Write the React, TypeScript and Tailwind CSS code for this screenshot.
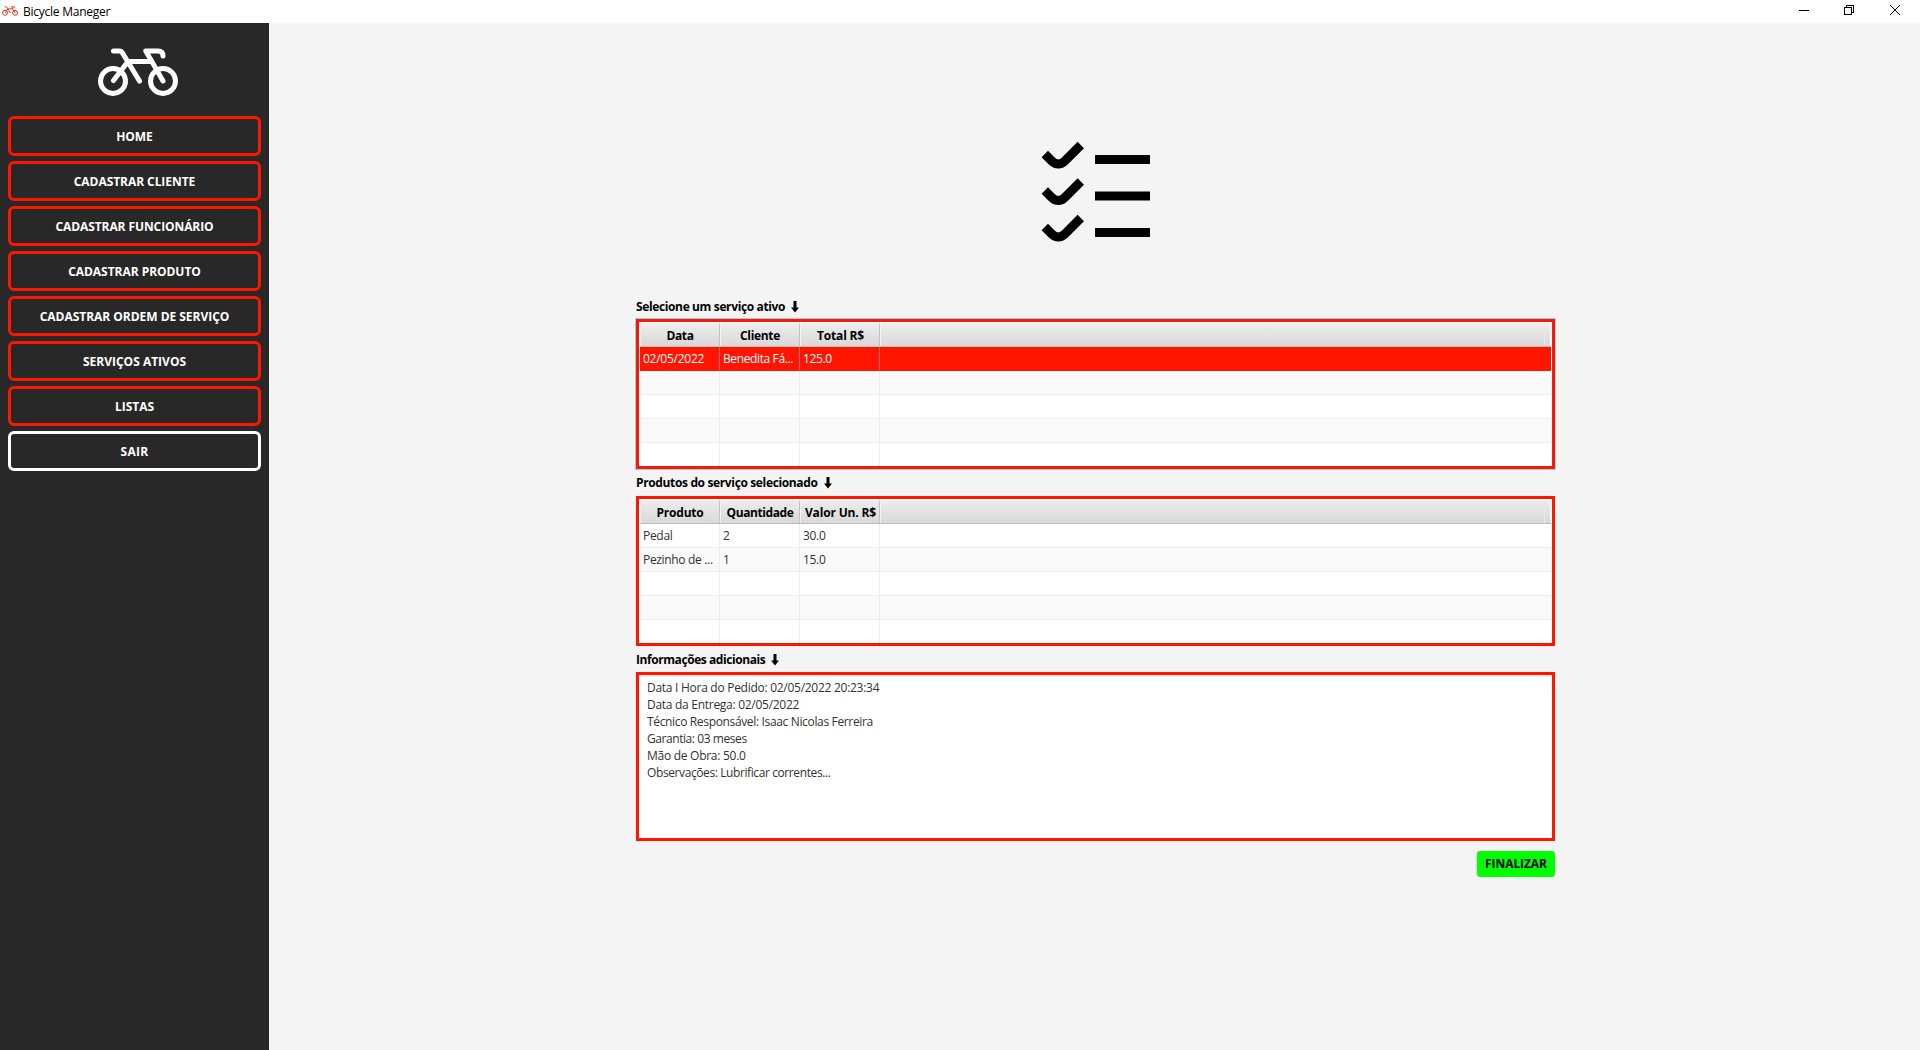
import type { ReactNode } from "react";

type Txt = { text: string; tracking: string };

const menu: (Txt & { border: string })[] = [
  { text: "HOME", tracking: "tracking-[-0.05px]", border: "border-[#ff1500]" },
  { text: "CADASTRAR CLIENTE", tracking: "tracking-[-0.06px]", border: "border-[#ff1500]" },
  { text: "CADASTRAR FUNCIONÁRIO", tracking: "tracking-[-0.09px]", border: "border-[#ff1500]" },
  { text: "CADASTRAR PRODUTO", tracking: "tracking-[-0.04px]", border: "border-[#ff1500]" },
  { text: "CADASTRAR ORDEM DE SERVIÇO", tracking: "tracking-[-0.03px]", border: "border-[#ff1500]" },
  { text: "SERVIÇOS ATIVOS", tracking: "tracking-[0px]", border: "border-[#ff1500]" },
  { text: "LISTAS", tracking: "tracking-[0px]", border: "border-[#ff1500]" },
  { text: "SAIR", tracking: "tracking-[0.3px]", border: "border-white" },
];

const services = {
  columns: [
    { text: "Data", tracking: "tracking-[-0.35px]" },
    { text: "Cliente", tracking: "tracking-[-0.3px]" },
    { text: "Total R$", tracking: "tracking-[-0.16px] pl-px" },
  ],
  rows: [
    [
      { text: "02/05/2022", tracking: "tracking-[-0.25px]" },
      { text: "Benedita Fá...", tracking: "tracking-[-0.38px]" },
      { text: "125.0", tracking: "tracking-[-0.35px]" },
    ],
  ] as Txt[][],
};

const products = {
  columns: [
    { text: "Produto", tracking: "tracking-[-0.2px]" },
    { text: "Quantidade", tracking: "tracking-[-0.4px]" },
    { text: "Valor Un. R$", tracking: "tracking-[-0.16px] pl-px" },
  ],
  rows: [
    [
      { text: "Pedal", tracking: "tracking-[-0.3px]" },
      { text: "2", tracking: "tracking-[-0.3px]" },
      { text: "30.0", tracking: "tracking-[-0.3px]" },
    ],
    [
      { text: "Pezinho de ...", tracking: "tracking-[-0.33px]" },
      { text: "1", tracking: "tracking-[-0.3px]" },
      { text: "15.0", tracking: "tracking-[-0.3px]" },
    ],
  ] as Txt[][],
};

const info: Txt[] = [
  { text: "Data I Hora do Pedido: 02/05/2022 20:23:34", tracking: "tracking-[-0.275px]" },
  { text: "Data da Entrega: 02/05/2022", tracking: "tracking-[-0.28px]" },
  { text: "Técnico Responsável: Isaac Nicolas Ferreira", tracking: "tracking-[-0.345px]" },
  { text: "Garantia: 03 meses", tracking: "tracking-[-0.43px]" },
  { text: "Mão de Obra: 50.0", tracking: "tracking-[-0.27px]" },
  { text: "Observações: Lubrificar correntes...", tracking: "tracking-[-0.4px]" },
];

function Bike({ className }: { className: string }) {
  return (
    <svg viewBox="0 0 80 48" className={className} fill="none" stroke="currentColor" strokeWidth="5" strokeLinecap="round" strokeLinejoin="round">
      <circle cx="15" cy="33" r="12.5" />
      <circle cx="65" cy="33" r="12.5" />
      <path d="M15.5 32.5 L30 13.5 H53" />
      <path d="M15.5 3 H21.5 Q23.5 3 24.5 5 L41.5 33" />
      <path d="M65 33 L47.8 3 H60 Q65 3 65 8" />
    </svg>
  );
}

function Checklist() {
  return (
    <svg viewBox="0 0 112 104" className="h-[104px] w-[112px]" fill="none" stroke="#000" strokeWidth="9">
      {[0, 36.5, 73].map((y) => (
        <g key={y} transform={`translate(0 ${y})`}>
          <path d="M4.8 14 L11.5 20.7 Q18.3 27.3 25.1 20.7 L40.8 5" />
          <path d="M55 19.5 H110" />
        </g>
      ))}
    </svg>
  );
}

function DownArrow() {
  return (
    <svg viewBox="0 0 8 12" className="ml-[5.5px] h-3 w-2 fill-black">
      <path d="M2.5 0 H5.5 V6.5 H8 L4 11.5 L0 6.5 H2.5 Z" />
    </svg>
  );
}

function SectionLabel({ tracking, width, children }: { tracking: string; width: string; children: ReactNode }) {
  return (
    <div className="flex h-[17px] items-center font-bold whitespace-nowrap text-black">
      <span className={`${tracking} ${width}`}>{children}</span>
      <DownArrow />
    </div>
  );
}

function DataTable({ columns, rows, selected }: { columns: Txt[]; rows: Txt[][]; selected?: boolean }) {
  return (
    <div
      className={`h-[150px] border-3 border-[#ff1500] bg-white p-px ${
        selected ? "shadow-[0_0_0_1px_#93d4e8]" : ""
      }`}
    >
      <div className="flex h-6 border-b border-[#bcbcbc] bg-linear-to-b from-[#ededed] to-[#d9d9d9] font-bold text-black">
        {columns.map((c) => (
          <div key={c.text} className="flex w-20 items-center justify-center border-t border-r border-l border-t-[#f3f3f3] border-r-[#c2c2c2] border-l-[#f3f3f3] whitespace-nowrap">
            <span className={c.tracking}>{c.text}</span>
          </div>
        ))}
        <div className="flex-1 border-t border-r border-l border-t-[#f3f3f3] border-r-[#e9e9e9] border-l-[#f3f3f3]" />
        <div className="w-[6px] border-t border-r border-[#f3f3f3]" />
      </div>
      <div className="h-[119px] overflow-hidden">
        {[0, 1, 2, 3, 4].map((i) => {
          const active = selected && i === 0;
          const stripe = i % 2 === 1 ? "bg-[#f9f9f9]" : "bg-white";
          return (
            <div
              key={i}
              className={`flex h-6 border-b ${
                active ? "border-[#ff1500] bg-[#ff1500] text-white" : `border-[#ededed] ${stripe} text-[#323232]`
              }`}
            >
              {[0, 1, 2].map((j) => {
                const cell = rows[i]?.[j];
                return (
                  <div
                    key={j}
                    className={`flex w-20 items-center border-r pl-[3px] whitespace-nowrap ${
                      active ? "border-[#a0707a]" : "border-[#ededed]"
                    }`}
                  >
                    {cell && <span className={cell.tracking}>{cell.text}</span>}
                  </div>
                );
              })}
            </div>
          );
        })}
      </div>
    </div>
  );
}

export default function App() {
  return (
    <div className="flex h-[1050px] w-[1920px] flex-col overflow-hidden bg-[#f4f4f4] font-['Open_Sans',sans-serif] text-[12px] leading-[17px]">
      <header className="flex h-[23px] shrink-0 items-center bg-white pl-[2px] text-black">
        <Bike className="mt-[6px] h-[10px] w-4 self-start text-[#e8382c]" />
        <span className="ml-[5px] tracking-[-0.25px]">Bicycle Maneger</span>
        <div className="mt-[5px] mr-5 ml-auto flex items-center self-start">
          <svg viewBox="0 0 10 10" className="mr-[35px] h-[10px] w-[10px]" shapeRendering="crispEdges">
            <path d="M0 5 H10 V6 H0 Z" />
          </svg>
          <svg viewBox="0 0 10 10" className="mr-9 h-[10px] w-[10px]" fill="none" stroke="#000" shapeRendering="crispEdges">
            <path d="M0.5 2.5 H7.5 V9.5 H0.5 Z M2.5 2.5 V0.5 H9.5 V7.5 H7.5" />
          </svg>
          <svg viewBox="0 0 10 10" className="h-[10px] w-[10px]" fill="none" stroke="#000">
            <path d="M0 0 L10 10 M10 0 L0 10" />
          </svg>
        </div>
      </header>
      <div className="flex flex-1">
        <aside className="flex w-[269px] flex-col bg-[#282828] px-2 pt-[25px]">
          <Bike className="ml-[90px] h-12 w-20 text-white" />
          <nav className="mt-5 flex flex-col gap-[5px]">
            {menu.map((m) => (
              <button key={m.text} className={`flex h-10 items-center justify-center rounded-[6px] border-3 font-bold text-white ${m.border}`}>
                <span className={m.tracking}>{m.text}</span>
              </button>
            ))}
          </nav>
        </aside>
        <main className="flex flex-1 flex-col pl-[367px]">
          <div className="flex w-[919px] flex-col">
            <div className="mt-[117px] ml-[404px]">
              <Checklist />
            </div>
            <div className="mt-[54px]">
              <SectionLabel tracking="tracking-[-0.37px]" width="w-[149px]">Selecione um serviço ativo</SectionLabel>
            </div>
            <div className="mt-1">
              <DataTable {...services} selected />
            </div>
            <div className="mt-[5px]">
              <SectionLabel tracking="tracking-[-0.36px]" width="w-[182px]">Produtos do serviço selecionado</SectionLabel>
            </div>
            <div className="mt-[5px]">
              <DataTable {...products} />
            </div>
            <div className="mt-[5px]">
              <SectionLabel tracking="tracking-[-0.43px]" width="w-[129px]">Informações adicionais</SectionLabel>
            </div>
            <div className="mt-1 h-[169px] border-3 border-[#ff1500] bg-white pt-1 pl-2 text-[#323232] shadow-[inset_0_2px_2px_#ececec]">
              {info.map((l) => (
                <p key={l.text} className={`whitespace-nowrap ${l.tracking}`}>{l.text}</p>
              ))}
            </div>
            <button className="mt-[10px] flex h-[26px] w-[78px] items-center justify-center self-end rounded-[3px] bg-[#00ff00] pb-[2px] font-bold text-black">
              <span className="tracking-[-0.08px]">FINALIZAR</span>
            </button>
          </div>
        </main>
      </div>
    </div>
  );
}
